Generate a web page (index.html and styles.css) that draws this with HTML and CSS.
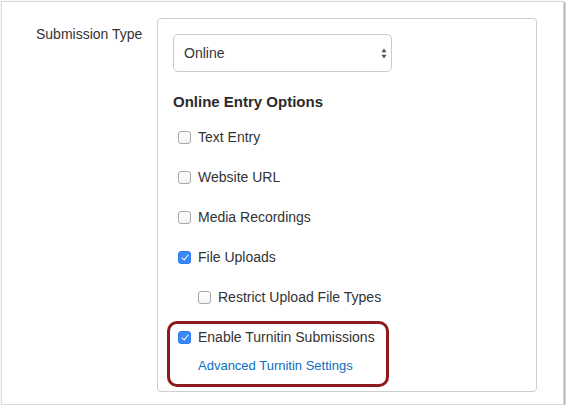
FILE: index.html
```html
<!DOCTYPE html>
<html lang="en">
<head>
    <meta charset="UTF-8">
    <title>Submission Type</title>
    <link rel="stylesheet" href="styles.css">
</head>
<body>
    <div class="frame">
        <div class="field">
            <div class="field-label">Submission Type</div>
            <div class="panel">
                <div class="select">
                    <span>Online</span>
                    <svg class="select-arrows" width="6" height="11" viewBox="0 0 6 11">
                        <path d="M3 0.5 L5.6 4.3 L0.4 4.3 Z" fill="#555"/>
                        <path d="M3 10.5 L5.6 6.7 L0.4 6.7 Z" fill="#555"/>
                    </svg>
                </div>
                <h3 class="options-title">Online Entry Options</h3>
                <div class="option"><span class="check"></span>Text Entry</div>
                <div class="option"><span class="check"></span>Website URL</div>
                <div class="option"><span class="check"></span>Media Recordings</div>
                <div class="option"><span class="check checked"></span>File Uploads</div>
                <div class="option sub"><span class="check"></span>Restrict Upload File Types</div>
                <div class="highlight">
                    <div class="option short"><span class="check checked"></span>Enable Turnitin Submissions</div>
                    <a class="settings-link" href="#">Advanced Turnitin Settings</a>
                </div>
            </div>
        </div>
    </div>
</body>
</html>
```

FILE: styles.css
```css
body {
    margin: 0;
    background: #fff;
    font-family: "Liberation Sans", Arial, sans-serif;
    color: #333;
}

.frame {
    margin: 1px 0 0 1px;
    width: 561px;
    height: 402px;
    border: 1px solid #d9d9d9;
    box-shadow: 1px 1px 2px rgba(0, 0, 0, 0.45);
    background: #fff;
}

.field {
    display: flex;
    padding: 16px 0 0 34px;
}

.field-label {
    width: 121px;
    padding-top: 6px;
    font-size: 14px;
    line-height: 20px;
}

.panel {
    box-sizing: border-box;
    width: 380px;
    height: 374px;
    padding: 15px 0 0 15px;
    border: 1px solid #cfcfcf;
    border-radius: 4px;
}

.select {
    box-sizing: border-box;
    width: 219px;
    height: 38px;
    padding: 0 4px 0 10px;
    display: flex;
    align-items: center;
    justify-content: space-between;
    border: 1px solid #cbcbcb;
    border-radius: 5px;
    font-size: 14px;
}

.options-title {
    margin: 20px 0 5px;
    font-size: 15px;
    line-height: 20px;
    font-weight: bold;
    color: #2b2b2b;
}

.option {
    height: 40px;
    display: flex;
    align-items: center;
    font-size: 14px;
}

.option.sub {
    padding-left: 20px;
}

.option.short {
    height: 26px;
}

.check {
    box-sizing: border-box;
    width: 13px;
    height: 13px;
    margin: 0 7px 0 5px;
    border: 1px solid #a9a9a9;
    border-radius: 3px;
    background: linear-gradient(#fff, #f3f3f3);
}

.check.checked {
    border-color: #2f7ef0;
    background: #3a88f6;
    position: relative;
}

.check.checked::after {
    content: "";
    position: absolute;
    left: 3.5px;
    top: 1px;
    width: 3px;
    height: 6px;
    border: solid #fff;
    border-width: 0 1.7px 1.7px 0;
    transform: rotate(40deg);
}

.highlight {
    box-sizing: border-box;
    width: 222px;
    margin: 4px 0 0 -6px;
    padding: 0 0 8px 3px;
    border: 3px solid #8e1a1e;
    border-radius: 10px;
}

.settings-link {
    display: block;
    margin: 6px 0 0 25px;
    font-size: 13px;
    line-height: 20px;
    color: #0b6fc2;
    text-decoration: none;
}
```
